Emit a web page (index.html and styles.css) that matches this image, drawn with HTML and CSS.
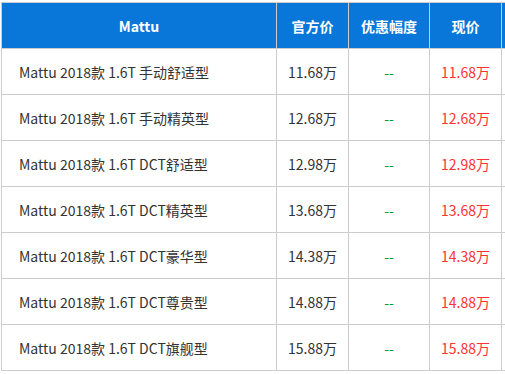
FILE: index.html
```html
<!DOCTYPE html>
<html>
<head>
<meta charset="utf-8">
<link rel="stylesheet" href="styles.css">
</head>
<body>
<div class="wrap">
<table class="price-table">
  <colgroup>
    <col class="c-name"><col class="c-price"><col class="c-disc"><col class="c-now"><col class="c-more">
  </colgroup>
  <thead>
    <tr><th>Mattu</th><th>官方价</th><th>优惠幅度</th><th>现价</th><th></th></tr>
  </thead>
  <tbody>
    <tr><td class="name">Mattu 2018款 1.6T 手动舒适型</td><td>11.68万</td><td class="disc">--</td><td class="now">11.68万</td><td></td></tr>
    <tr><td class="name">Mattu 2018款 1.6T 手动精英型</td><td>12.68万</td><td class="disc">--</td><td class="now">12.68万</td><td></td></tr>
    <tr><td class="name">Mattu 2018款 1.6T DCT舒适型</td><td>12.98万</td><td class="disc">--</td><td class="now">12.98万</td><td></td></tr>
    <tr><td class="name">Mattu 2018款 1.6T DCT精英型</td><td>13.68万</td><td class="disc">--</td><td class="now">13.68万</td><td></td></tr>
    <tr><td class="name">Mattu 2018款 1.6T DCT豪华型</td><td>14.38万</td><td class="disc">--</td><td class="now">14.38万</td><td></td></tr>
    <tr><td class="name">Mattu 2018款 1.6T DCT尊贵型</td><td>14.88万</td><td class="disc">--</td><td class="now">14.88万</td><td></td></tr>
    <tr><td class="name">Mattu 2018款 1.6T DCT旗舰型</td><td>15.88万</td><td class="disc">--</td><td class="now">15.88万</td><td></td></tr>
  </tbody>
</table>
</div>
</body>
</html>
```
FILE: styles.css
```css
html, body {
  margin: 0;
  padding: 0;
  background: #fff;
  overflow: hidden;
}
.wrap {
  padding: 2px 0 0 1px;
  width: 504px;
  height: 372px;
  overflow: hidden;
}
.price-table {
  border-collapse: collapse;
  table-layout: fixed;
  width: 581px;
  font-family: "Noto Sans CJK SC", "Noto Sans", sans-serif;
  font-size: 14px;
  color: #333;
}
.c-name { width: 275px; }
.c-price { width: 72px; }
.c-disc { width: 81px; }
.c-now { width: 72px; }
.c-more { width: 80px; }
.price-table th,
.price-table td {
  border: 1px solid #cccccc;
  text-align: center;
  padding: 0;
  white-space: nowrap;
}
.price-table th {
  background: #0877d9;
  color: #fff;
  font-weight: bold;
  height: 45px;
}
.price-table td {
  height: 45px;
}
.price-table td.name {
  text-align: left;
  padding-left: 17px;
}
.price-table td.disc { color: #00a000; }
.price-table td.now { color: #ff3333; }
```
